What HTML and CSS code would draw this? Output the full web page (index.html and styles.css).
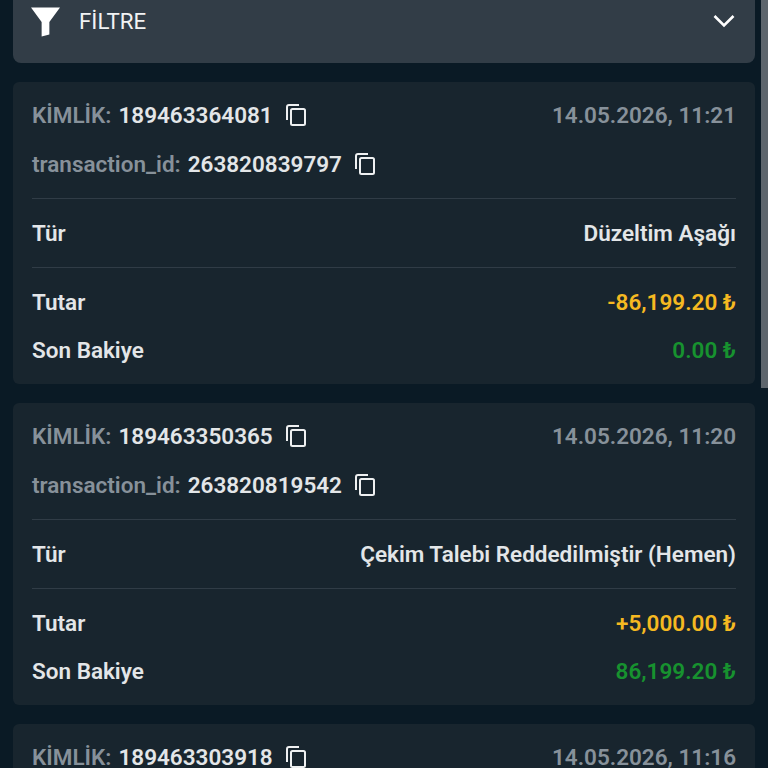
FILE: index.html
```html
<!DOCTYPE html>
<html lang="tr">
<head>
    <meta charset="UTF-8">
    <title>Hesap Hareketleri</title>
    <link rel="stylesheet" href="styles.css">
</head>
<body>
    <svg class="sprite" width="0" height="0">
        <symbol id="copy" viewBox="0 0 20 22">
            <path d="M13 1H3a2 2 0 0 0-2 2v13" fill="none" stroke="currentColor" stroke-width="2"/>
            <rect x="5" y="5" width="14" height="16" rx="1.5" fill="none" stroke="currentColor" stroke-width="2"/>
        </symbol>
    </svg>

    <main class="page">
        <section class="filter">
            <svg class="filter-icon" viewBox="0 0 30 30"><path d="M0 0H30L19 15V28L11 30V15Z" fill="#fff"/></svg>
            <span class="filter-title">FİLTRE</span>
            <svg class="chevron" viewBox="0 0 22 14"><path d="M1.500 2L11 11.500L20.500 2" fill="none" stroke="#fff" stroke-width="2.600"/></svg>
        </section>

        <article class="card">
            <div class="id-row">
                <span class="muted">KİMLİK:</span> <span class="id">189463364081</span>
                <svg class="copy"><use href="#copy"/></svg>
                <span class="date">14.05.2026, 11:21</span>
            </div>
            <div class="id-row">
                <span class="muted">transaction_id:</span> <span class="id">263820839797</span>
                <svg class="copy"><use href="#copy"/></svg>
            </div>
            <div class="row type"><span>Tür</span><span>Düzeltim Aşağı</span></div>
            <div class="row amount"><span>Tutar</span><span class="yellow">-86,199.20 ₺</span></div>
            <div class="row"><span>Son Bakiye</span><span class="green">0.00 ₺</span></div>
        </article>

        <article class="card">
            <div class="id-row">
                <span class="muted">KİMLİK:</span> <span class="id">189463350365</span>
                <svg class="copy"><use href="#copy"/></svg>
                <span class="date">14.05.2026, 11:20</span>
            </div>
            <div class="id-row">
                <span class="muted">transaction_id:</span> <span class="id">263820819542</span>
                <svg class="copy"><use href="#copy"/></svg>
            </div>
            <div class="row type"><span>Tür</span><span>Çekim Talebi Reddedilmiştir (Hemen)</span></div>
            <div class="row amount"><span>Tutar</span><span class="yellow">+5,000.00 ₺</span></div>
            <div class="row"><span>Son Bakiye</span><span class="green">86,199.20 ₺</span></div>
        </article>

        <article class="card">
            <div class="id-row">
                <span class="muted">KİMLİK:</span> <span class="id">189463303918</span>
                <svg class="copy"><use href="#copy"/></svg>
                <span class="date">14.05.2026, 11:16</span>
            </div>
        </article>
    </main>

    <div class="scrollbar"></div>
</body>
</html>
```
FILE: styles.css
```css
html, body {
    margin: 0;
    height: 768px;
    overflow: hidden;
}

body {
    font-family: Roboto, sans-serif;
    font-weight: 600;
    font-size: 22.5px;
    background-color: #0a1a25;
    color: #e3e6e8;
    position: relative;
}

.sprite {
    position: absolute;
}

.page {
    display: flex;
    flex-direction: column;
    gap: 19px;
    padding: 0 13px;
    width: 742px;
}

.filter {
    display: flex;
    align-items: center;
    height: 63px;
    box-sizing: border-box;
    padding: 0 20px 21px 18px;
    background-color: #323d47;
    border-radius: 0 0 8px 8px;
}

.filter-icon {
    width: 29px;
    height: 30px;
    margin-top: 1px;
}

.filter-title {
    margin-left: 19px;
    font-size: 22.300px;
    font-weight: 400;
    color: #f2f3f4;
}

.chevron {
    width: 22px;
    height: 14px;
    margin-left: auto;
}

.card {
    background-color: #18252e;
    border-radius: 6px;
    padding: 8px 19px 10px;
}

.id-row {
    display: flex;
    align-items: center;
    height: 49px;
}

.muted {
    color: #87919a;
    margin-right: 7px;
}

.id {
    color: #e3e6e8;
}

.copy {
    width: 20px;
    height: 22px;
    margin-left: 13px;
    color: #eef0f1;
}

.date {
    margin-left: auto;
    color: #87919a;
}

.row {
    display: flex;
    justify-content: space-between;
    align-items: center;
    height: 48px;
}

.type {
    height: 70px;
    margin-top: 10px;
    border-top: 1px solid #303c46;
    border-bottom: 1px solid #303c46;
    box-sizing: border-box;
}

.amount {
    margin-top: 10px;
}

.yellow {
    color: #f5b921;
}

.green {
    color: #17922f;
}

.scrollbar {
    position: absolute;
    top: 0;
    right: 0;
    width: 7px;
    height: 388px;
    background-color: #5d656c;
}
```
